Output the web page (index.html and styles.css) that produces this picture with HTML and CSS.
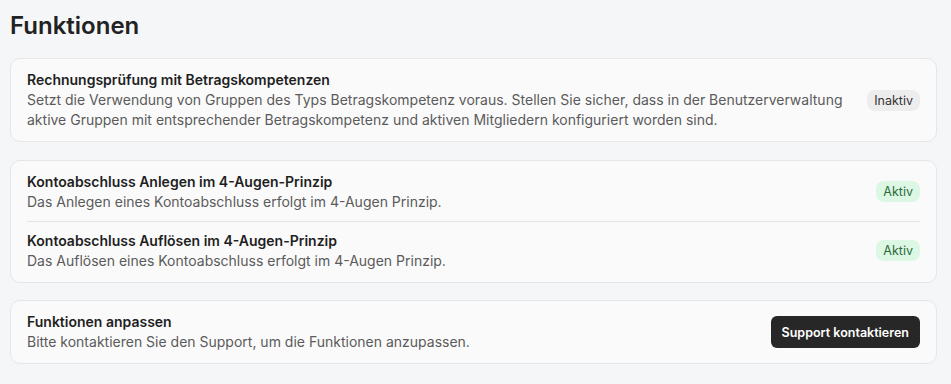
FILE: index.html
```html
<!DOCTYPE html>
<html lang="de">
<head>
<meta charset="utf-8">
<title>Funktionen</title>
<link rel="stylesheet" href="styles.css">
</head>
<body>
<main class="page">
  <h1 class="page-title">Funktionen</h1>
  <section class="card">
    <div class="row">
      <div class="row-text">
        <div class="row-title">Rechnungsprüfung mit Betragskompetenzen</div>
        <div class="row-desc">Setzt die Verwendung von Gruppen des Typs Betragskompetenz voraus. Stellen Sie sicher, dass in der Benutzerverwaltung aktive Gruppen mit entsprechender Betragskompetenz und aktiven Mitgliedern konfiguriert worden sind.</div>
      </div>
      <span class="badge badge-off">Inaktiv</span>
    </div>
  </section>
  <section class="card">
    <div class="row">
      <div class="row-text">
        <div class="row-title">Kontoabschluss Anlegen im 4-Augen-Prinzip</div>
        <div class="row-desc">Das Anlegen eines Kontoabschluss erfolgt im 4-Augen Prinzip.</div>
      </div>
      <span class="badge badge-on">Aktiv</span>
    </div>
    <div class="row row-divided">
      <div class="row-text">
        <div class="row-title">Kontoabschluss Auflösen im 4-Augen-Prinzip</div>
        <div class="row-desc">Das Auflösen eines Kontoabschluss erfolgt im 4-Augen Prinzip.</div>
      </div>
      <span class="badge badge-on">Aktiv</span>
    </div>
  </section>
  <section class="card">
    <div class="row">
      <div class="row-text">
        <div class="row-title">Funktionen anpassen</div>
        <div class="row-desc">Bitte kontaktieren Sie den Support, um die Funktionen anzupassen.</div>
      </div>
      <button class="btn" type="button">Support kontaktieren</button>
    </div>
  </section>
</main>
</body>
</html>
```
FILE: styles.css
```css
* { box-sizing: border-box; }
html, body { margin: 0; }
body {
  background: #f5f6f8;
  font-family: Inter, "Noto Sans", "Liberation Sans", sans-serif;
  color: #1f1f1f;
}
.page {
  padding: 10px 14px 20px 10px;
  display: flex;
  flex-direction: column;
  gap: 17.5px;
}
.page-title {
  margin: 0 0 -1.5px 0;
  font-size: 24px;
  line-height: 32px;
  font-weight: 600;
  color: #222;
}
.card {
  background: #fafafa;
  border: 1px solid #e6e6e8;
  border-radius: 10px;
  padding: 2px 16px;
}
.row {
  display: flex;
  align-items: center;
  gap: 14px;
  padding: 9px 0;
}
.row-divided { border-top: 1px solid #e5e5e7; }
.row-text { flex: 1; min-width: 0; }
.row-title {
  font-size: 14px;
  line-height: 20px;
  font-weight: 600;
  color: #1f1f1f;
}
.row-desc {
  font-size: 14px;
  line-height: 20px;
  color: #5b5b5b;
}
.badge {
  flex: none;
  font-size: 12.5px;
  line-height: 21px;
  padding: 0 7px;
  border-radius: 8px;
}
.badge-off { background: #ededee; color: #333; }
.badge-on { background: #dcf7e3; color: #2d6a3e; }
.btn {
  flex: none;
  height: 32px;
  padding: 0 11px;
  border: none;
  border-radius: 6px;
  background: #272727;
  color: #fff;
  font-family: inherit;
  font-size: 12.5px;
  font-weight: 600;
}
```
